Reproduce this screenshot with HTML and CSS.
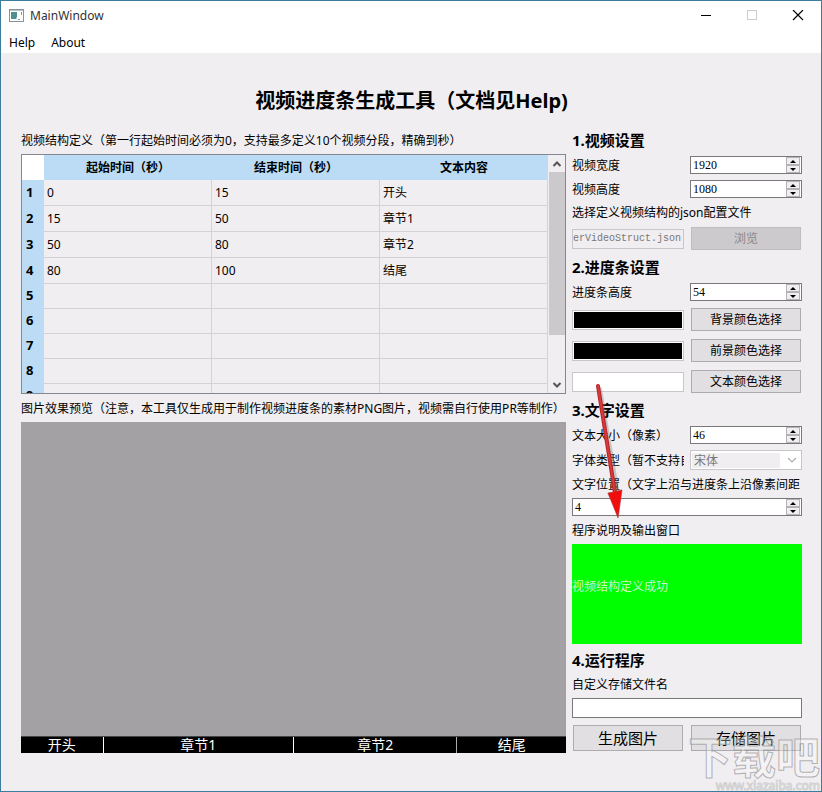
FILE: index.html
```html
<!DOCTYPE html>
<html lang="zh-CN">
<head>
<meta charset="utf-8">
<meta name="viewport" content="width=device-width, initial-scale=1">
<title>MainWindow</title>
<link rel="stylesheet" href="styles.css">
</head>
<body>
<div class="window">
  <header class="titlebar">
    <svg class="app-icon" viewBox="0 0 16 14" aria-hidden="true">
      <rect x="0.5" y="0.5" width="14" height="12" fill="#fff" stroke="#8a929c"/>
      <path d="M1 1.5h13" stroke="#b9c0c8"/>
      <rect x="2" y="3" width="6" height="7" fill="#4f8f8c"/>
      <path d="M9 10.5h2M12.500 3v3" stroke="#8a929c"/>
      <path d="M7.500 8v2" stroke="#a9c9d6"/>
    </svg>
    <span class="window-name">MainWindow</span>
    <button class="caption" aria-label="最小化"><svg viewBox="0 0 12 12"><path d="M1 5.500h10" stroke="#000"/></svg></button>
    <button class="caption" aria-label="最大化" disabled><svg viewBox="0 0 12 12"><rect x="1.500" y="0.500" width="9" height="9" fill="none" stroke="#ccc"/></svg></button>
    <button class="caption" aria-label="关闭"><svg viewBox="0 0 12 12"><path d="M1 0l10 10M11 0L1 10" stroke="#000" stroke-width="1.200"/></svg></button>
  </header>
  <nav class="menubar">
    <a href="#help">Help</a>
    <a href="#about">About</a>
  </nav>

  <main class="content">
    <h1>视频进度条生成工具（文档见Help)</h1>
    <div class="columns">
      <section class="left">
        <p class="label">视频结构定义（第一行起始时间必须为0，支持最多定义10个视频分段，精确到秒）</p>
        <div class="table-frame">
          <div class="table-view">
            <table>
              <thead><tr><td class="corner"></td><th>起始时间（秒）</th><th>结束时间（秒）</th><th>文本内容</th></tr></thead>
              <tbody>
                <tr class="filled"><th>1</th><td>0</td><td>15</td><td>开头</td></tr>
                <tr class="filled"><th>2</th><td>15</td><td>50</td><td>章节1</td></tr>
                <tr class="filled"><th>3</th><td>50</td><td>80</td><td>章节2</td></tr>
                <tr class="filled"><th>4</th><td>80</td><td>100</td><td>结尾</td></tr>
                <tr><th>5</th><td></td><td></td><td></td></tr>
                <tr><th>6</th><td></td><td></td><td></td></tr>
                <tr><th>7</th><td></td><td></td><td></td></tr>
                <tr><th>8</th><td></td><td></td><td></td></tr>
                <tr><th>9</th><td></td><td></td><td></td></tr>
              </tbody>
            </table>
          </div>
          <div class="scrollbar">
            <button aria-label="向上滚动"><svg viewBox="0 0 10 8"><path d="M1.500 6L5 2.500 8.500 6" fill="none" stroke="#555" stroke-width="2"/></svg></button>
            <div class="track"><div class="thumb"></div></div>
            <button aria-label="向下滚动"><svg viewBox="0 0 10 8"><path d="M1.500 2L5 5.500 8.500 2" fill="none" stroke="#555" stroke-width="2"/></svg></button>
          </div>
        </div>
        <p class="label">图片效果预览（注意，本工具仅生成用于制作视频进度条的素材PNG图片，视频需自行使用PR等制作）</p>
        <div class="preview">
          <div class="progress">
            <span class="seg seg-a">开头</span>
            <span class="seg seg-b">章节1</span>
            <span class="seg seg-c">章节2</span>
            <span class="seg seg-d">结尾</span>
          </div>
        </div>
      </section>

      <form class="right">
        <h2>1.视频设置</h2>
        <div class="pair">
          <label for="vw">视频宽度</label>
          <div class="spin"><input id="vw" type="number" value="1920"><span class="steps"><button type="button" aria-label="增加"><i class="up"></i></button><button type="button" aria-label="减少"><i class="down"></i></button></span></div>
        </div>
        <div class="pair">
          <label for="vh">视频高度</label>
          <div class="spin"><input id="vh" type="number" value="1080"><span class="steps"><button type="button" aria-label="增加"><i class="up"></i></button><button type="button" aria-label="减少"><i class="down"></i></button></span></div>
        </div>
        <label class="label" for="file">选择定义视频结构的json配置文件</label>
        <div class="pair tall">
          <input id="file" class="file" type="text" value="erVideoStruct.json" disabled>
          <button type="button" class="btn" disabled>浏览</button>
        </div>

        <h2>2.进度条设置</h2>
        <div class="pair">
          <label for="bh">进度条高度</label>
          <div class="spin"><input id="bh" type="number" value="54"><span class="steps"><button type="button" aria-label="增加"><i class="up"></i></button><button type="button" aria-label="减少"><i class="down"></i></button></span></div>
        </div>
        <div class="pair tall"><div class="swatch black"></div><button type="button" class="btn">背景颜色选择</button></div>
        <div class="pair tall"><div class="swatch black"></div><button type="button" class="btn">前景颜色选择</button></div>
        <div class="pair tall"><div class="swatch"></div><button type="button" class="btn">文本颜色选择</button></div>

        <h2>3.文字设置</h2>
        <div class="pair">
          <label for="fs">文本大小（像素）</label>
          <div class="spin"><input id="fs" type="number" value="46"><span class="steps"><button type="button" aria-label="增加"><i class="up"></i></button><button type="button" aria-label="减少"><i class="down"></i></button></span></div>
        </div>
        <div class="pair">
          <label for="ff">字体类型（暂不支持自</label>
          <div class="combo">
            <select id="ff" disabled><option>宋体</option></select>
            <svg viewBox="0 0 10 6" aria-hidden="true"><path d="M1 1l4 4 4-4" fill="none" stroke="#b0aeb0" stroke-width="1.200"/></svg>
          </div>
        </div>
        <label class="label" for="pos">文字位置（文字上沿与进度条上沿像素间距</label>
        <div class="spin"><input id="pos" type="number" value="4"><span class="steps"><button type="button" aria-label="增加"><i class="up"></i></button><button type="button" aria-label="减少"><i class="down"></i></button></span></div>
        <p class="label">程序说明及输出窗口</p>
        <output class="console">视频结构定义成功</output>

        <h2>4.运行程序</h2>
        <label class="label" for="name">自定义存储文件名</label>
        <input id="name" class="name" type="text">
        <div class="pair actions">
          <button type="button" class="btn">生成图片</button>
          <button type="button" class="btn">存储图片</button>
        </div>

        <svg class="arrow" viewBox="0 0 34 140" aria-hidden="true">
          <path d="M10 8L28 114" stroke="#777" stroke-opacity="0.350" stroke-width="4" stroke-linecap="round"/>
          <path d="M17 112l15-4-3 28z" fill="#777" fill-opacity="0.350"/>
          <path d="M8 5L25 112" stroke="#b4262a" stroke-width="4" stroke-linecap="round"/>
          <path d="M8 5L25 112" stroke="#d8393a" stroke-width="2" stroke-linecap="round"/>
          <path d="M18 112l6-1 8-2-4 28z" fill="#f20d0d" stroke="#b4262a" stroke-width="0.500"/>
        </svg>
      </form>
    </div>
  </main>

  <div class="watermark"><span class="mark">下载吧</span><span class="site">www.xiazaiba.com</span></div>
</div>
</body>
</html>
```
FILE: styles.css
```css
* { box-sizing: border-box; }

body {
  margin: 0;
  font: 12px/16px "Noto Sans", "Noto Sans CJK SC", sans-serif;
  color: #000;
}

h1, h2, p { margin: 0; }

button, input, select {
  font: inherit;
  color: inherit;
  margin: 0;
  padding: 0;
  border-radius: 0;
}

.window {
  position: relative;
  display: flex;
  flex-direction: column;
  min-height: 100vh;
  border: 1px solid #3c7c9c;
  background: #f0eef0;
  overflow: hidden;
}

.titlebar {
  display: flex;
  align-items: center;
  height: 29px;
  padding-left: 8px;
  background: #fff;
}

.app-icon { width: 16px; height: 14px; }

.window-name {
  flex: 1;
  padding-left: 5px;
  color: #333;
}

.caption {
  display: grid;
  place-items: center;
  width: 46px;
  height: 28px;
  border: 0;
  background: none;
}

.caption svg { width: 12px; height: 12px; }

.menubar {
  display: flex;
  gap: 16px;
  height: 23px;
  padding: 5px 8px;
  background: #fff;
}

.menubar a { color: #000; text-decoration: none; }

.content {
  flex: 1;
  display: flex;
  flex-direction: column;
  padding: 33px 19px 38px 20px;
}

h1 {
  margin-bottom: 14px;
  font-size: 20px;
  line-height: 30px;
  text-align: center;
}

h2 { font-size: 15px; line-height: 20px; }

.columns {
  flex: 1;
  display: grid;
  grid-template-columns: minmax(0, 545fr) minmax(0, 230fr);
  gap: 6px;
}

.left, .right {
  display: flex;
  flex-direction: column;
  gap: 6px;
  min-width: 0;
}

.left { padding-top: 2px; }
.right { position: relative; }

.label, .pair label {
  display: block;
  height: 16px;
  line-height: 18px;
  white-space: nowrap;
  overflow: hidden;
}

.table-frame {
  display: flex;
  height: 240px;
  border: 1px solid #828790;
}

.table-view { flex: 1; overflow: hidden; }

table {
  width: 100%;
  table-layout: fixed;
  border-collapse: separate;
  border-spacing: 0;
}

thead th { height: 25px; padding: 0; background: #bbdcf4; }
.corner { width: 22px; background: #fff; border: 0; }

tbody th {
  padding: 0 0 3px 4px;
  background: #bbdcf4;
  font-size: 13px;
  text-align: left;
}

tbody tr { height: 25px; }
tbody tr.filled { height: 26px; }

tbody td {
  padding: 0 3px;
  border-right: 1px solid #d4d2d4;
  border-bottom: 1px solid #d4d2d4;
}

.scrollbar {
  display: flex;
  flex-direction: column;
  width: 17px;
  padding-left: 1px;
}

.scrollbar button {
  display: grid;
  place-items: center;
  height: 17px;
  border: 0;
  background: none;
}

.scrollbar svg { width: 10px; height: 8px; }
.track { flex: 1; }
.thumb { height: 80%; background: #cbc9cb; }

.preview {
  flex: 1;
  display: flex;
  flex-direction: column;
  justify-content: flex-end;
  background: #a3a1a3;
}

.progress {
  display: flex;
  height: 17px;
  border-top: 1px solid #444;
  background: #000;
  color: #fff;
  font-size: 14px;
  line-height: 16px;
  text-align: center;
}

.seg { flex-basis: 0; border-right: 1px solid #fff; }
.seg-a { flex-grow: 82; }
.seg-b { flex-grow: 190; }
.seg-c { flex-grow: 163; border-color: #aaa; }
.seg-d { flex-grow: 109; border: 0; }

.pair {
  display: grid;
  grid-template-columns: minmax(0, 1fr) minmax(0, 1fr);
  column-gap: 6px;
  align-items: center;
}

.tall { height: 25px; }
.actions { height: 28px; }

.spin {
  display: flex;
  height: 18px;
  border: 1px solid #7a787a;
  background: #fff;
}

.spin input {
  flex: 1;
  min-width: 0;
  padding-left: 2px;
  border: 0;
  background: none;
  font-family: "Liberation Serif", serif;
  appearance: textfield;
}

.spin input::-webkit-inner-spin-button { appearance: none; margin: 0; }

.steps {
  display: flex;
  flex-direction: column;
  width: 14px;
  margin-right: 1px;
}

.steps button {
  flex: 1;
  display: grid;
  place-items: center;
  border: 1px solid #b4b2b4;
  background: #f0eef0;
}

.up, .down {
  border: 3px solid transparent;
  width: 0;
  height: 0;
}

.up { border-top: 0; border-bottom-color: #000; }
.down { border-bottom: 0; border-top-color: #000; }

.btn {
  height: 23px;
  margin: 0 1px;
  border: 1px solid #adabad;
  background: #e1dfe1;
}

.btn:disabled { border-color: #bfbdbf; background: #cccacc; color: #8a888a; }
.actions .btn { height: 26px; font-size: 15px; }

.file {
  width: 100%;
  height: 20px;
  border: 1px solid #c8c6c8;
  background: #f0eef0;
  color: #777;
  font-family: "Liberation Mono", monospace;
  font-size: 10px;
}

.swatch {
  height: 20px;
  padding: 1px;
  border: 1px solid #c8c6c8;
  background: #fff;
}

.black { background: #000 content-box; box-shadow: inset 0 0 0 1px #fff; }

.combo {
  display: flex;
  align-items: center;
  height: 20px;
  padding: 1px 4px 1px 1px;
  border: 1px solid #c8c6c8;
  background: #fff;
}

.combo select {
  flex: 1;
  height: 15px;
  margin-right: 7px;
  padding-left: 2px;
  border: 0;
  appearance: none;
  background: #f0eef0;
  color: #777;
  opacity: 1;
  line-height: 15px;
}

.combo svg { width: 10px; height: 6px; }

.console {
  display: flex;
  align-items: center;
  height: 100px;
  padding-bottom: 14px;
  background: #0f0;
  color: #c8f5c8;
}

.name {
  height: 20px;
  padding: 0 3px;
  border: 1px solid #7a787a;
  background: #fff;
}

/* Annotation laid over the text settings */
.arrow {
  position: absolute;
  top: 251px;
  left: 18px;
  width: 34px;
  height: 140px;
  fill: none;
  pointer-events: none;
}

.watermark {
  position: absolute;
  right: 1px;
  bottom: -2px;
  display: flex;
  flex-direction: column;
  align-items: flex-end;
  color: rgba(255, 255, 255, 0.3);
  -webkit-text-stroke: 1px rgba(150, 148, 150, 0.7);
  pointer-events: none;
}

.mark { font-size: 44px; line-height: 44px; font-weight: bold; }

.site {
  font-size: 12px;
  line-height: 14px;
  color: #fff;
  -webkit-text-stroke: 1px rgba(150, 148, 150, 0.4);
}
```
